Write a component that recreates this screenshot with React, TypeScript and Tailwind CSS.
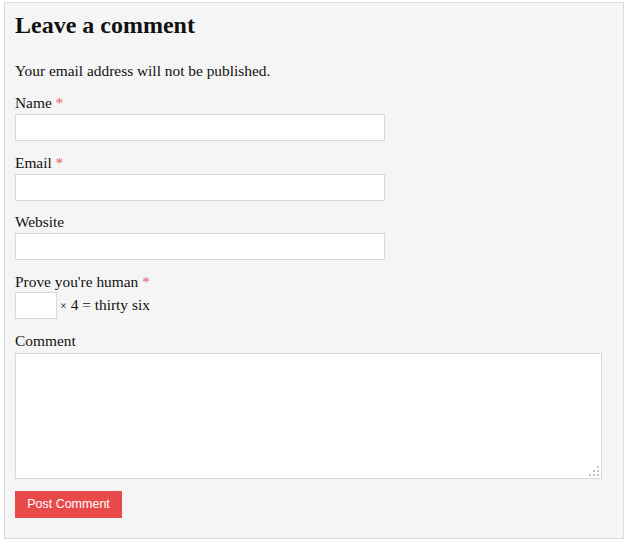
import React from 'react';

function Required() {
  return <span className="text-[#e8595a]"> *</span>;
}

function Field({ label, required }: { label: string; required?: boolean }) {
  return (
    <div className="mb-[11.5px]">
      <label className="block leading-[20px] mb-[1px]">
        {label}
        {required && <Required />}
      </label>
      <input
        type="text"
        className="block w-[370px] h-[27px] bg-white border border-[#d8d8d8] outline-none px-1"
      />
    </div>
  );
}

export default function App() {
  return (
    <div className="pl-[4px] pt-[2px] font-['Liberation_Serif',serif] text-[15.4px] text-[#111]">
      <div className="w-[620px] h-[537px] bg-[#f5f5f5] border border-[#dcdcdc] px-[10px] pt-[7px]">
        <h3 className="text-[24px] font-bold leading-[30px] text-[#111]">Leave a comment</h3>
        <p className="mt-[21px] leading-[20px]">Your email address will not be published.</p>

        <form className="mt-[12px]" onSubmit={(e) => e.preventDefault()}>
          <Field label="Name" required />
          <Field label="Email" required />
          <Field label="Website" />

          {/* captcha */}
          <div className="mb-[12px]">
            <label className="block leading-[20px]">
              Prove you're human
              <Required />
            </label>
            <div className="flex items-center gap-[3px]">
              <input
                type="text"
                className="w-[42px] h-[27px] bg-white border border-[#d8d8d8] outline-none"
              />
              <span>
                <span className="text-[12px]">×</span> 4 = thirty six
              </span>
            </div>
          </div>

          <label className="block leading-[20px] mb-[2px]">Comment</label>
          <div className="relative w-[587px]">
            <textarea className="block w-[587px] h-[126px] bg-white border border-[#d8d8d8] outline-none resize-none" />
            <svg
              className="absolute right-[3px] bottom-[3px]"
              width="10"
              height="10"
              viewBox="0 0 10 10"
              fill="#c4c4c4"
            >
              <rect x="8" y="0" width="2" height="2" />
              <rect x="4" y="4" width="2" height="2" />
              <rect x="8" y="4" width="2" height="2" />
              <rect x="0" y="8" width="2" height="2" />
              <rect x="4" y="8" width="2" height="2" />
              <rect x="8" y="8" width="2" height="2" />
            </svg>
          </div>

          <button
            type="submit"
            className="mt-[12px] w-[107px] h-[27px] bg-[#e84a4a] text-white font-['Liberation_Sans',sans-serif] text-[12.5px] leading-[27px] text-center"
          >
            Post Comment
          </button>
        </form>
      </div>
    </div>
  );
}
